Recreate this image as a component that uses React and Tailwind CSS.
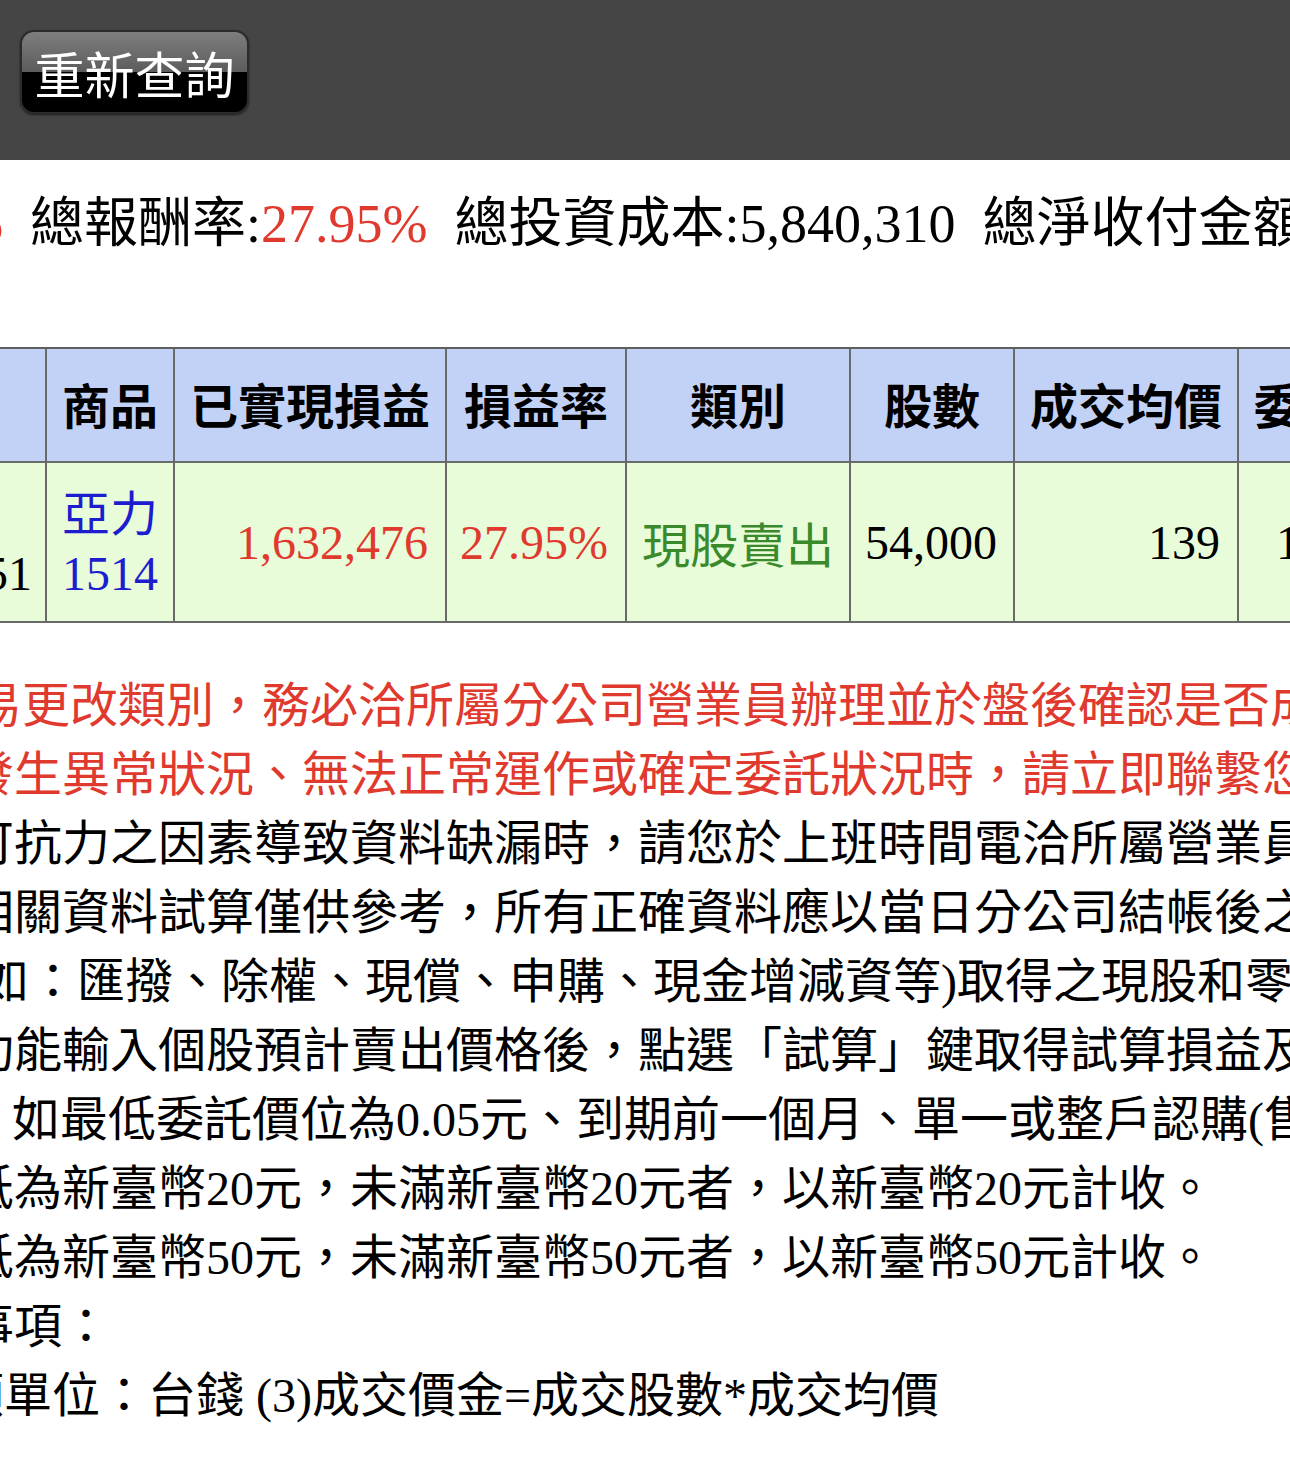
import React from 'react';

const serif = "font-['Liberation_Serif','Noto_Sans_CJK_TC',serif]";
const sans = "font-['Noto_Sans_CJK_TC','Noto_Sans',sans-serif]";

const cols = [
  { w: 'w-[122px]', head: '' },
  { w: 'w-[128px]', head: '商品' },
  { w: 'w-[272px]', head: '已實現損益' },
  { w: 'w-[180px]', head: '損益率' },
  { w: 'w-[224px]', head: '類別' },
  { w: 'w-[164px]', head: '股數' },
  { w: 'w-[224px]', head: '成交均價' },
  { w: 'w-[175px]', head: '委託價' },
];

const notes = [
  { ml: 'ml-[-26px]', red: true, text: '易更改類別，務必洽所屬分公司營業員辦理並於盤後確認是否成交' },
  { ml: 'ml-[-34px]', red: true, text: '發生異常狀況、無法正常運作或確定委託狀況時，請立即聯繫您的營業員' },
  { ml: 'ml-[-34px]', text: '可抗力之因素導致資料缺漏時，請您於上班時間電洽所屬營業員' },
  { ml: 'ml-[-34px]', text: '相關資料試算僅供參考，所有正確資料應以當日分公司結帳後之資料為準' },
  { ml: 'ml-[-19px]', text: '如：匯撥、除權、現償、申購、現金增減資等)取得之現股和零股' },
  { ml: 'ml-[-34px]', text: '功能輸入個股預計賣出價格後，點選「試算」鍵取得試算損益及' },
  { ml: 'ml-[12px]', text: '如最低委託價位為0.05元、到期前一個月、單一或整戶認購(售' },
  { ml: 'ml-[-34px]', text: '低為新臺幣20元，未滿新臺幣20元者，以新臺幣20元計收。' },
  { ml: 'ml-[-34px]', text: '低為新臺幣50元，未滿新臺幣50元者，以新臺幣50元計收。' },
  { ml: 'ml-[-34px]', text: '事項：' },
  { ml: 'ml-[-44px]', text: '額單位：台錢 (3)成交價金=成交股數*成交均價' },
];

export default function App() {
  return (
    <div className={`w-[1290px] h-[1481px] overflow-hidden bg-white text-black ${serif}`}>
      {/* 頂部工具列 */}
      <div className="h-[160px] bg-[#454545] pt-[30px] pl-[20px]">
        <button className={`w-[229px] h-[84px] rounded-[14px] border-2 border-[#2b2b2b] bg-[linear-gradient(to_bottom,#7e7e7e_0%,#5c5c5c_50%,#000_50%,#000_100%)] text-white text-[50px] leading-none shadow-[0_1px_2px_rgba(0,0,0,0.6)] ${sans}`}>
          重新查詢
        </button>
      </div>

      {/* 總計 */}
      <div className="h-[187px] pt-[32px]">
        <div className="ml-[-24px] whitespace-nowrap text-[54px] leading-[64px]">
          <span className="text-[#e0392e]">6</span>
          {'\u00a0\u00a0總報酬率:'}
          <span className="text-[#e0392e]">27.95%</span>
          {'\u00a0\u00a0總投資成本:5,840,310\u00a0\u00a0總淨收付金額:1,632,476'}
        </div>
      </div>

      {/* 明細表 */}
      <div className="ml-[-75px] w-max border-t-2 border-[#5f5f5f] text-[48px]">
        <div className="flex bg-[#c2d2f6]">
          {cols.map((c, i) => (
            <div key={i} className={`${c.w} shrink-0 h-[114px] border-r-2 border-b-2 border-[#6a6a6a] flex items-center justify-center pb-[4px] font-bold ${sans} text-black`}>
              {c.head}
            </div>
          ))}
        </div>
        <div className="flex bg-[#e8fcd9] leading-[63px]">
          <div className="w-[122px] shrink-0 h-[160px] border-r-2 border-b-2 border-[#6a6a6a] flex flex-col justify-center items-end pr-[13px]">
            <div>{'\u00a0'}</div>
            <div>151</div>
          </div>
          <div className="w-[128px] shrink-0 h-[160px] border-r-2 border-b-2 border-[#6a6a6a] flex flex-col justify-center items-center text-[#1d1dcf]">
            <div className={sans}>亞力</div>
            <div>1514</div>
          </div>
          <div className="w-[272px] shrink-0 h-[160px] border-r-2 border-b-2 border-[#6a6a6a] flex items-center justify-end pr-[17px] text-[#e0392e]">
            1,632,476
          </div>
          <div className="w-[180px] shrink-0 h-[160px] border-r-2 border-b-2 border-[#6a6a6a] flex items-center justify-end pr-[17px] text-[#e0392e]">
            27.95%
          </div>
          <div className={`w-[224px] shrink-0 h-[160px] border-r-2 border-b-2 border-[#6a6a6a] flex items-center justify-center text-[#3a8a2c] ${sans}`}>
            現股賣出
          </div>
          <div className="w-[164px] shrink-0 h-[160px] border-r-2 border-b-2 border-[#6a6a6a] flex items-center justify-end pr-[16px]">
            54,000
          </div>
          <div className="w-[224px] shrink-0 h-[160px] border-r-2 border-b-2 border-[#6a6a6a] flex items-center justify-end pr-[17px]">
            139
          </div>
          <div className="w-[175px] shrink-0 h-[160px] border-r-2 border-b-2 border-[#6a6a6a] flex items-center pl-[37px]">
            139
          </div>
        </div>
      </div>

      {/* 注意事項 */}
      <div className="pt-[48px] text-[48px] leading-[69px]">
        {notes.map((n, i) => (
          <div key={i} className={`${n.ml} whitespace-nowrap ${n.red ? 'text-[#e0392e]' : 'text-black'}`}>
            {n.text}
          </div>
        ))}
      </div>
    </div>
  );
}
